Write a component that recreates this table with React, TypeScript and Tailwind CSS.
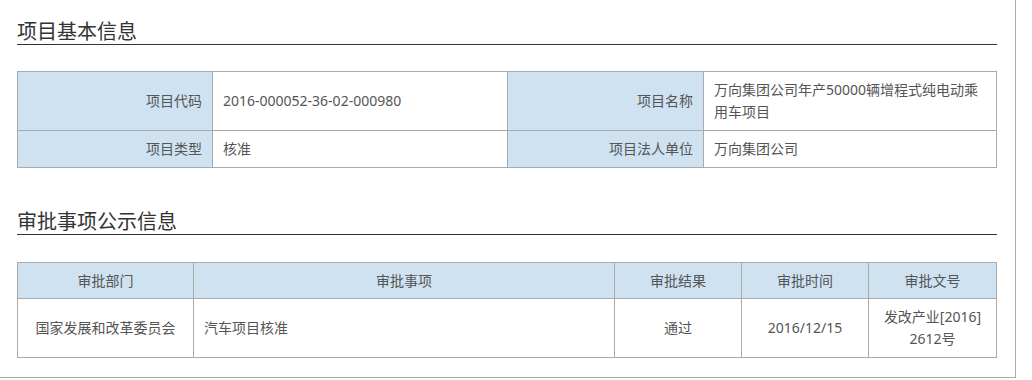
import React from 'react';

const font = { fontFamily: '"Noto Sans", "Noto Sans CJK SC", sans-serif' };

const SectionTitle = ({ text, className }: { text: string; className?: string }) => (
    <h2 className={`text-[20px] leading-[24px] text-[#333] border-b border-[#333] ${className ?? ''}`}>
        {text}
    </h2>
);

const th = "border border-[#aaa] bg-[#cfe2f1] text-[#555] font-normal";
const td = "border border-[#aaa] bg-white text-[#555]";

const approvals = [
    {
        dept: "国家发展和改革委员会",
        item: "汽车项目核准",
        result: "通过",
        date: "2016/12/15",
        docPrefix: "发改产业[2016]",
        docNo: "2612号",
    },
];

export default function App() {
    return (
        <div className="bg-white w-[1016px] h-[378px] border-r border-b border-[#aaa] pt-[20px] pl-[17px] pr-[18px]" style={font}>
            <SectionTitle text="项目基本信息" />

            <table className="mt-[26px] w-full table-fixed border-collapse text-[14px] leading-[22px]">
                <colgroup>
                    <col className="w-[195px]" />
                    <col className="w-[295px]" />
                    <col className="w-[196px]" />
                    <col />
                </colgroup>
                <tbody>
                    <tr className="h-[59px]">
                        <td className={`${th} text-right px-[10px] py-[7px]`}>项目代码</td>
                        <td className={`${td} px-[10px] py-[7px]`}>2016-000052-36-02-000980</td>
                        <td className={`${th} text-right px-[10px] py-[7px]`}>项目名称</td>
                        <td className={`${td} px-[10px] py-[7px]`}>万向集团公司年产50000辆增程式纯电动乘用车项目</td>
                    </tr>
                    <tr className="h-[37px]">
                        <td className={`${th} text-right px-[10px] py-[7px]`}>项目类型</td>
                        <td className={`${td} px-[10px] py-[7px]`}>核准</td>
                        <td className={`${th} text-right px-[10px] py-[7px]`}>项目法人单位</td>
                        <td className={`${td} px-[10px] py-[7px]`}>万向集团公司</td>
                    </tr>
                </tbody>
            </table>

            <SectionTitle text="审批事项公示信息" className="mt-[42px]" />

            <table className="mt-[27px] w-full table-fixed border-collapse text-[14px] leading-[22px]">
                <colgroup>
                    <col className="w-[176px]" />
                    <col className="w-[421px]" />
                    <col className="w-[127px]" />
                    <col className="w-[127px]" />
                    <col />
                </colgroup>
                <thead>
                    <tr className="h-[36px]">
                        <th className={`${th} text-center py-[6px]`}>审批部门</th>
                        <th className={`${th} text-center py-[6px]`}>审批事项</th>
                        <th className={`${th} text-center py-[6px]`}>审批结果</th>
                        <th className={`${th} text-center py-[6px]`}>审批时间</th>
                        <th className={`${th} text-center py-[6px]`}>审批文号</th>
                    </tr>
                </thead>
                <tbody>
                    {approvals.map((a) => (
                        <tr key={a.docNo} className="h-[59px]">
                            <td className={`${td} text-center px-[6px] py-[7px]`}>{a.dept}</td>
                            <td className={`${td} px-[10px] py-[7px]`}>{a.item}</td>
                            <td className={`${td} text-center px-[10px] py-[7px]`}>{a.result}</td>
                            <td className={`${td} text-center px-[10px] py-[7px]`}>{a.date}</td>
                            <td className={`${td} text-center px-[8px] py-[7px]`}>
                                {a.docPrefix}<wbr />{a.docNo}
                            </td>
                        </tr>
                    ))}
                </tbody>
            </table>
        </div>
    );
}
